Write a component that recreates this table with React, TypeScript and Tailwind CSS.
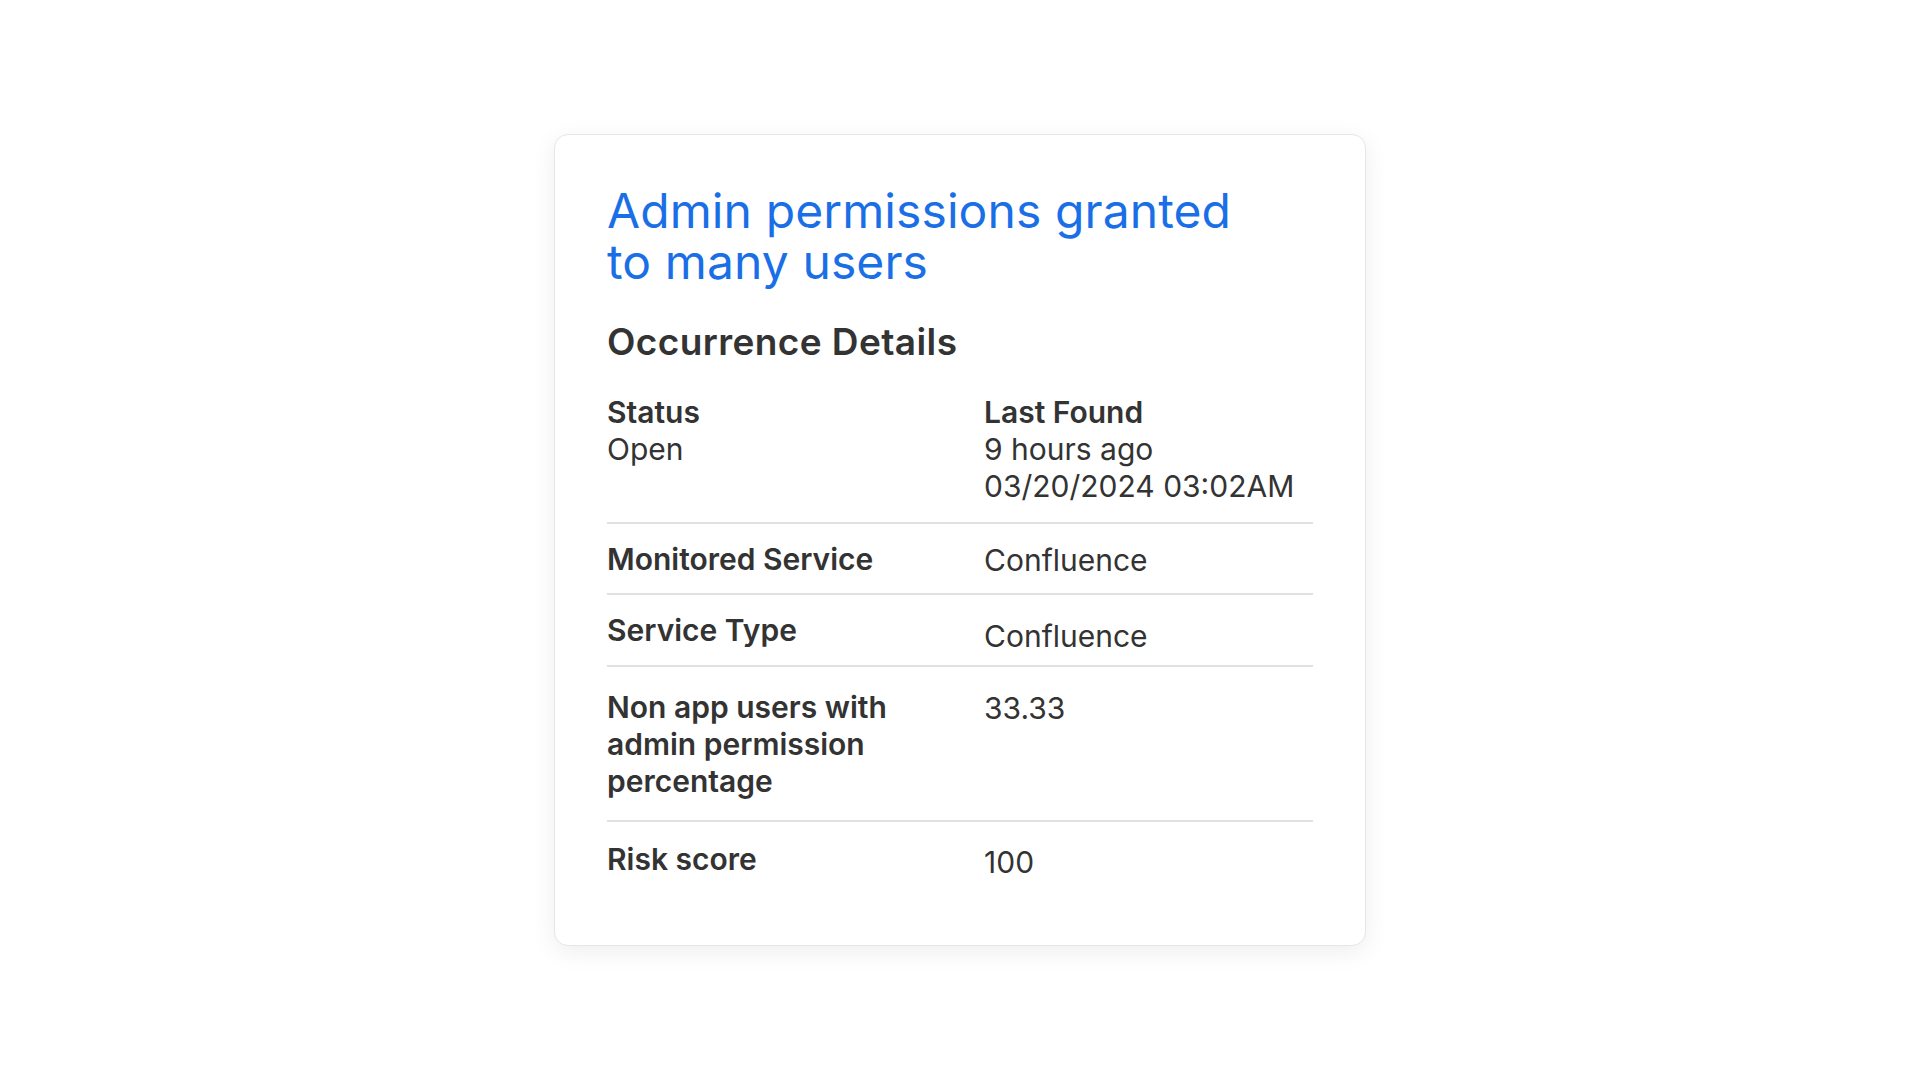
const rows = [
  { label: 'Monitored Service', value: 'Confluence', rowClass: 'pt-[17px] pb-[15px] border-b-2', valueClass: 'translate-y-[1px]' },
  { label: 'Service Type', value: 'Confluence', rowClass: 'pt-[17px] pb-[16px] border-b-2', valueClass: 'translate-y-[6px]' },
  { label: 'Non app users with admin permission percentage', value: '33.33', rowClass: 'pt-[22px] pb-[20px] border-b-2', valueClass: 'translate-y-[1px]' },
  { label: 'Risk score', value: '100', rowClass: 'pt-[19px] pb-[17px]', valueClass: 'translate-y-[3px]' },
]

export default function App() {
  return (
    <div
      className="min-h-screen bg-white flex items-center justify-center"
      style={{ fontFamily: 'Inter, "Noto Sans", sans-serif' }}
    >
      <div className="w-[812px] rounded-[14px] border border-[#e6e6e6] bg-white px-[52px] pt-[50px] pb-[50px] shadow-[0_6px_24px_rgba(0,0,0,0.07)]">
        <h1 className="text-[48px] leading-[51px] font-normal text-[#1a6fe6] tracking-[0.1px] max-w-[660px]">
          Admin permissions granted to many users
        </h1>

        <h2 className="mt-[33px] text-[37px] leading-[44px] font-semibold text-[#333333] tracking-[0.4px]">
          Occurrence Details
        </h2>

        <div className="mt-[30px] text-[30px] leading-[37px] text-[#333333]">
          <div className="grid grid-cols-[377px_1fr] pb-[17px] border-b-2 border-[#e0e0e0]">
            <div>
              <div className="font-semibold">Status</div>
              <div>Open</div>
            </div>
            <div>
              <div className="font-semibold">Last Found</div>
              <div>9 hours ago</div>
              <div>03/20/2024 03:02AM</div>
            </div>
          </div>

          {rows.map((row) => (
            <div key={row.label} className={'grid grid-cols-[377px_1fr] border-[#e0e0e0] ' + row.rowClass}>
              <div className="font-semibold pr-[40px]">{row.label}</div>
              <div className={row.valueClass}>{row.value}</div>
            </div>
          ))}
        </div>
      </div>
    </div>
  )
}
